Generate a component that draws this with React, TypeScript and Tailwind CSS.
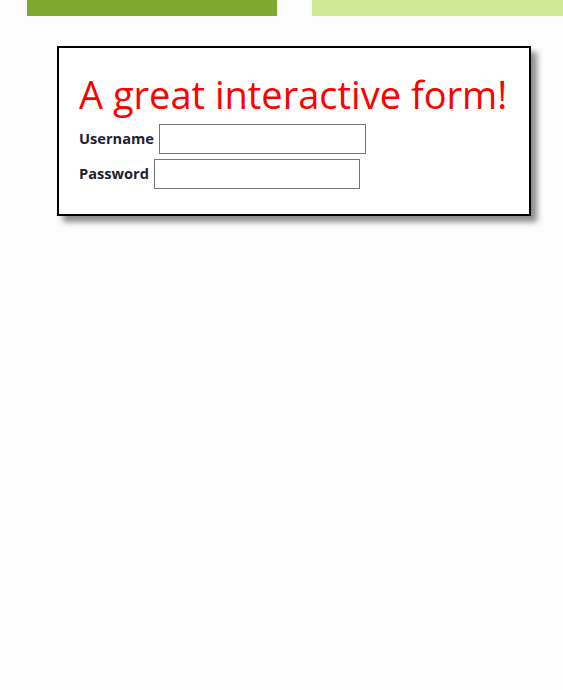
export default function App() {
    return (
        <div className="min-h-[690px] bg-[#fdfdfd]" style={{ fontFamily: '"Open Sans", "Noto Sans", sans-serif' }}>
            <div className="flex">
                <div className="ml-[27px] h-4 w-[250px] bg-[#7fa82f]" />
                <div className="ml-[35px] h-4 w-[251px] bg-[#d0e793]" />
            </div>
            <div className="ml-[57px] mt-[30px] h-[170px] w-[474px] border-2 border-black bg-white pl-5 pt-[24px] shadow-[6px_6px_6px_rgba(0,0,0,0.45)]">
                <h1 className="text-[38px] leading-[44px] text-[#ff0000]">A great interactive form!</h1>
                <form className="mt-[8px] flex flex-col gap-[5px]">
                    <label className="flex items-center gap-[5px] text-[14.6px] font-bold text-[#1c2230]">
                        Username
                        <input type="text" className="h-[30px] w-[207px] border border-[#767676] bg-white" />
                    </label>
                    <label className="flex items-center gap-[5px] text-[14.6px] font-bold text-[#1c2230]">
                        Password
                        <input type="password" className="h-[30px] w-[206px] border border-[#767676] bg-white" />
                    </label>
                </form>
            </div>
        </div>
    );
}
